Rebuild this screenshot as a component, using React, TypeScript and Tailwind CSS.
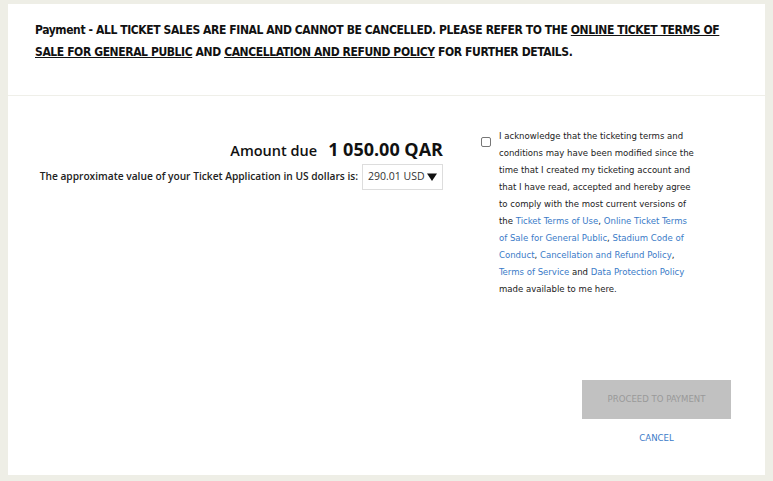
import React, { useState } from 'react';

const App = () => {
    const [agreed, setAgreed] = useState(false);

    return (
        <div className="h-[481px] w-[773px] bg-[#eeeee6] pb-[6px] pl-[8px] pr-[8px] pt-[4px]">
            <div className="flex h-full flex-col bg-white">
                {/* Header notice */}
                <div className="h-[92px] border-b border-[#efefe9] pl-[27px] pr-[30px] pt-[15px]">
                    <p className="text-[12px] leading-[22px] font-bold tracking-[-0.4px] text-[#111]" style={{ fontFamily: '"DejaVu Sans Condensed", sans-serif' }}>
                        Payment - ALL TICKET SALES ARE FINAL AND CANNOT BE CANCELLED. PLEASE REFER TO THE <a className="underline">ONLINE TICKET TERMS OF SALE FOR GENERAL PUBLIC</a> AND{' '}
                        <a className="underline">CANCELLATION AND REFUND POLICY</a> FOR FURTHER DETAILS.
                    </p>
                </div>

                {/* Body */}
                <div className="flex flex-1 pt-[31px]">
                    <div className="flex w-[435px] flex-col items-end pt-[9px]" style={{ fontFamily: '"Open Sans", sans-serif' }}>
                        <div className="flex items-baseline gap-[11px] text-[#111]">
                            <span className="text-[14.5px] font-semibold">Amount due</span>
                            <span className="text-[18px] font-bold">1 050.00 QAR</span>
                        </div>
                        <div className="mt-[1px] flex items-center gap-[4px]">
                            <span className="text-[10.2px] font-semibold text-[#222]">The approximate value of your Ticket Application in US dollars is:</span>
                            <div className="flex h-[26px] w-[81px] items-center justify-between border border-[#ddd] pl-[5px] pr-[5px] text-[10.5px] text-[#333]">
                                <span>290.01 USD</span>
                                <svg width="10" height="8" viewBox="0 0 10 8">
                                    <path d="M0 0.5 L10 0.5 L5 8 Z" fill="#111" />
                                </svg>
                            </div>
                        </div>
                    </div>

                    <div className="ml-[38px] flex w-[215px] flex-col">
                        <div className="flex gap-[8px]">
                            <input
                                type="checkbox"
                                checked={agreed}
                                onChange={() => setAgreed(!agreed)}
                                className="mt-[10px] h-[10px] w-[10px] shrink-0 appearance-none rounded-[2px] border border-[#777]"
                            />
                            <p className="w-[197px] text-[9.5px] leading-[17px] text-[#222]" style={{ fontFamily: '"DejaVu Sans Condensed", sans-serif' }}>
                                I acknowledge that the ticketing terms and conditions may have been modified since the time that I created my ticketing account and that I have read, accepted and hereby agree to comply with the most current versions of the{' '}
                                <a className="text-[#3a7bc8]">Ticket Terms of Use</a>, <a className="text-[#3a7bc8]">Online Ticket Terms of Sale for General Public</a>,{' '}
                                <a className="text-[#3a7bc8]">Stadium Code of Conduct</a>, <a className="text-[#3a7bc8]">Cancellation and Refund Policy</a>,{' '}
                                <a className="text-[#3a7bc8]">Terms of Service</a> and <a className="text-[#3a7bc8]">Data Protection Policy</a> made available to me here.
                            </p>
                        </div>

                        <div className="mt-auto mb-[30px] ml-[101px] flex w-[149px] flex-col items-center" style={{ fontFamily: '"DejaVu Sans Condensed", sans-serif' }}>
                            <button disabled className="h-[39px] w-[149px] bg-[#c1c1c1] text-[9.5px] text-[#999]">
                                PROCEED TO PAYMENT
                            </button>
                            <button className="mt-[12px] text-[9.5px] text-[#3a7bc8]">CANCEL</button>
                        </div>
                    </div>
                </div>
            </div>
        </div>
    );
};

export default App;
